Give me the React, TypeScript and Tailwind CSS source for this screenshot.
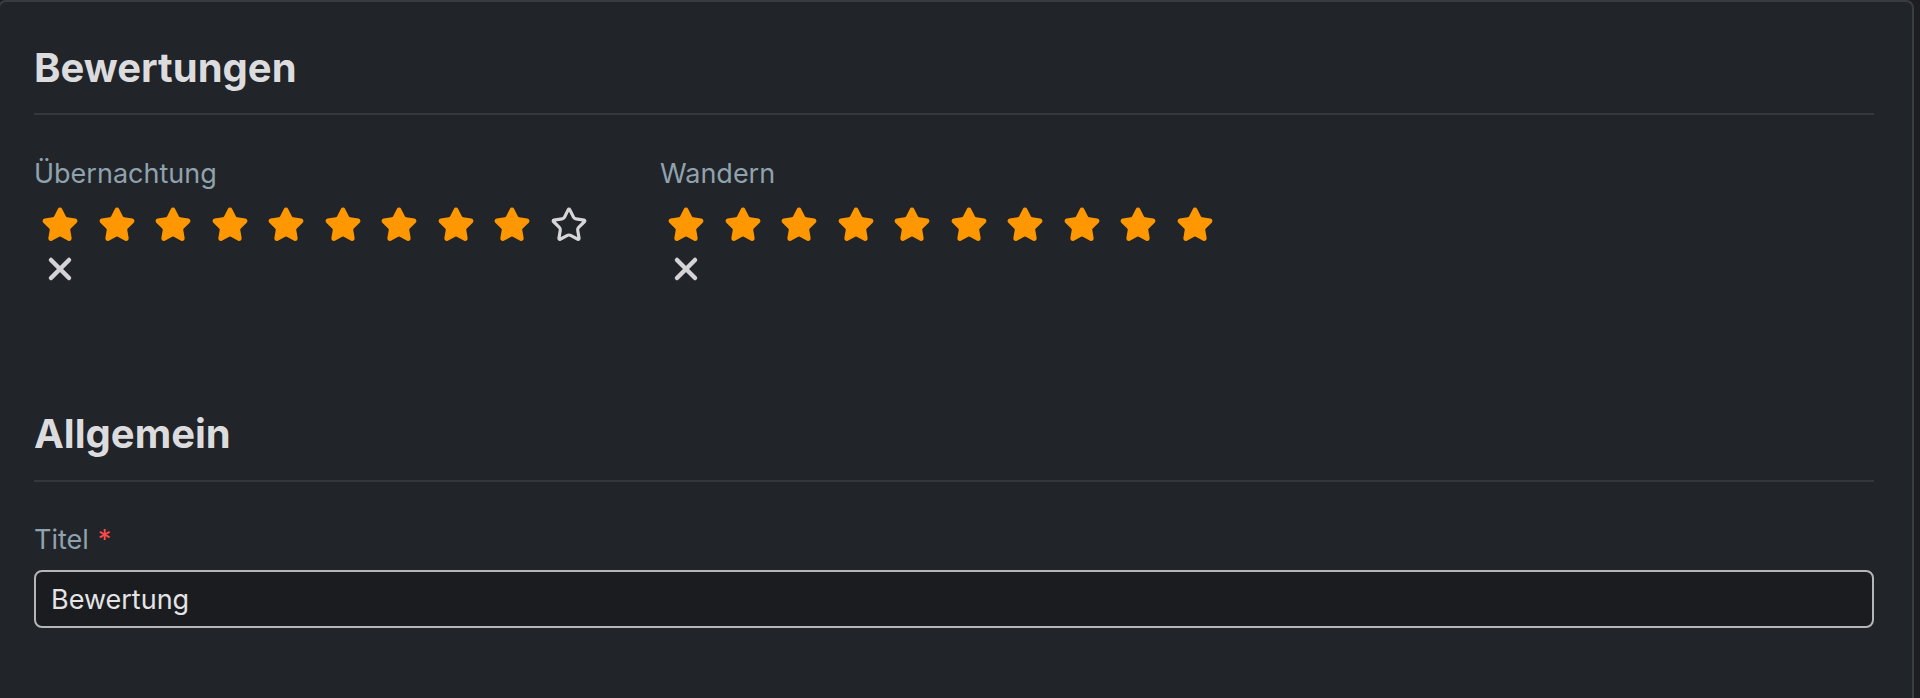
import { Star, X } from "lucide-react"

const ratings = [
  { label: "Übernachtung", value: 9 },
  { label: "Wandern", value: 10 },
]

function StarRating({ label, value }: { label: string; value: number }) {
  return (
    <div className="w-[626px] shrink-0">
      <label className="block text-[27px] leading-[36px] text-[#8fa2ad]">{label}</label>
      <div className="mt-[13.5px] flex gap-[4.5px]">
        {Array.from({ length: 10 }).map((_, i) => (
          <button key={i} className="flex w-[52px] justify-center">
            {i < value ? (
              <Star size={38} strokeWidth={2} className="fill-[#ff9800] text-[#ff9800]" />
            ) : (
              <Star size={38} strokeWidth={2} className="text-[#d6d6d8]" />
            )}
          </button>
        ))}
      </div>
      <button className="mt-[7.5px] flex w-[52px] justify-center">
        <X size={36} strokeWidth={3} className="text-[#d4d4d6]" />
      </button>
    </div>
  )
}

export default function App() {
  return (
    <div
      className="h-[698px] w-[1920px] overflow-hidden bg-[#1c1e22]"
      style={{ fontFamily: "Inter, 'Noto Sans', sans-serif" }}
    >
      <div className="-ml-[2px] h-[720px] w-[1916px] rounded-[8px] border-2 border-[#393c42] bg-[#212429] pl-[34px] pr-[38px] pt-[42px]">
        {/* BEWERTUNGEN */}
        <h2 className="border-b-2 border-[#34373c] pb-[21px] text-[40px] font-bold leading-[48px] text-[#dcdcde]">
          Bewertungen
        </h2>

        <div className="mt-[41px] flex">
          {ratings.map((r) => (
            <StarRating key={r.label} label={r.label} value={r.value} />
          ))}
        </div>

        {/* ALLGEMEIN */}
        <h2 className="mt-[123px] border-b-2 border-[#34373c] pb-[22px] text-[40px] font-bold leading-[48px] text-[#dcdcde]">
          Allgemein
        </h2>

        <label className="mt-[40px] block text-[27px] leading-[36px] text-[#8fa2ad]">
          Titel
          <span className="ml-[9px] text-[#ff4a4a]">*</span>
        </label>
        <input
          defaultValue="Bewertung"
          className="mt-[12px] block h-[58px] w-full rounded-[8px] border-2 border-[#b5b6b8] bg-[#1b1c20] pl-[15px] text-[27px] text-[#e4e4e6] outline-none"
        />
      </div>
    </div>
  )
}
